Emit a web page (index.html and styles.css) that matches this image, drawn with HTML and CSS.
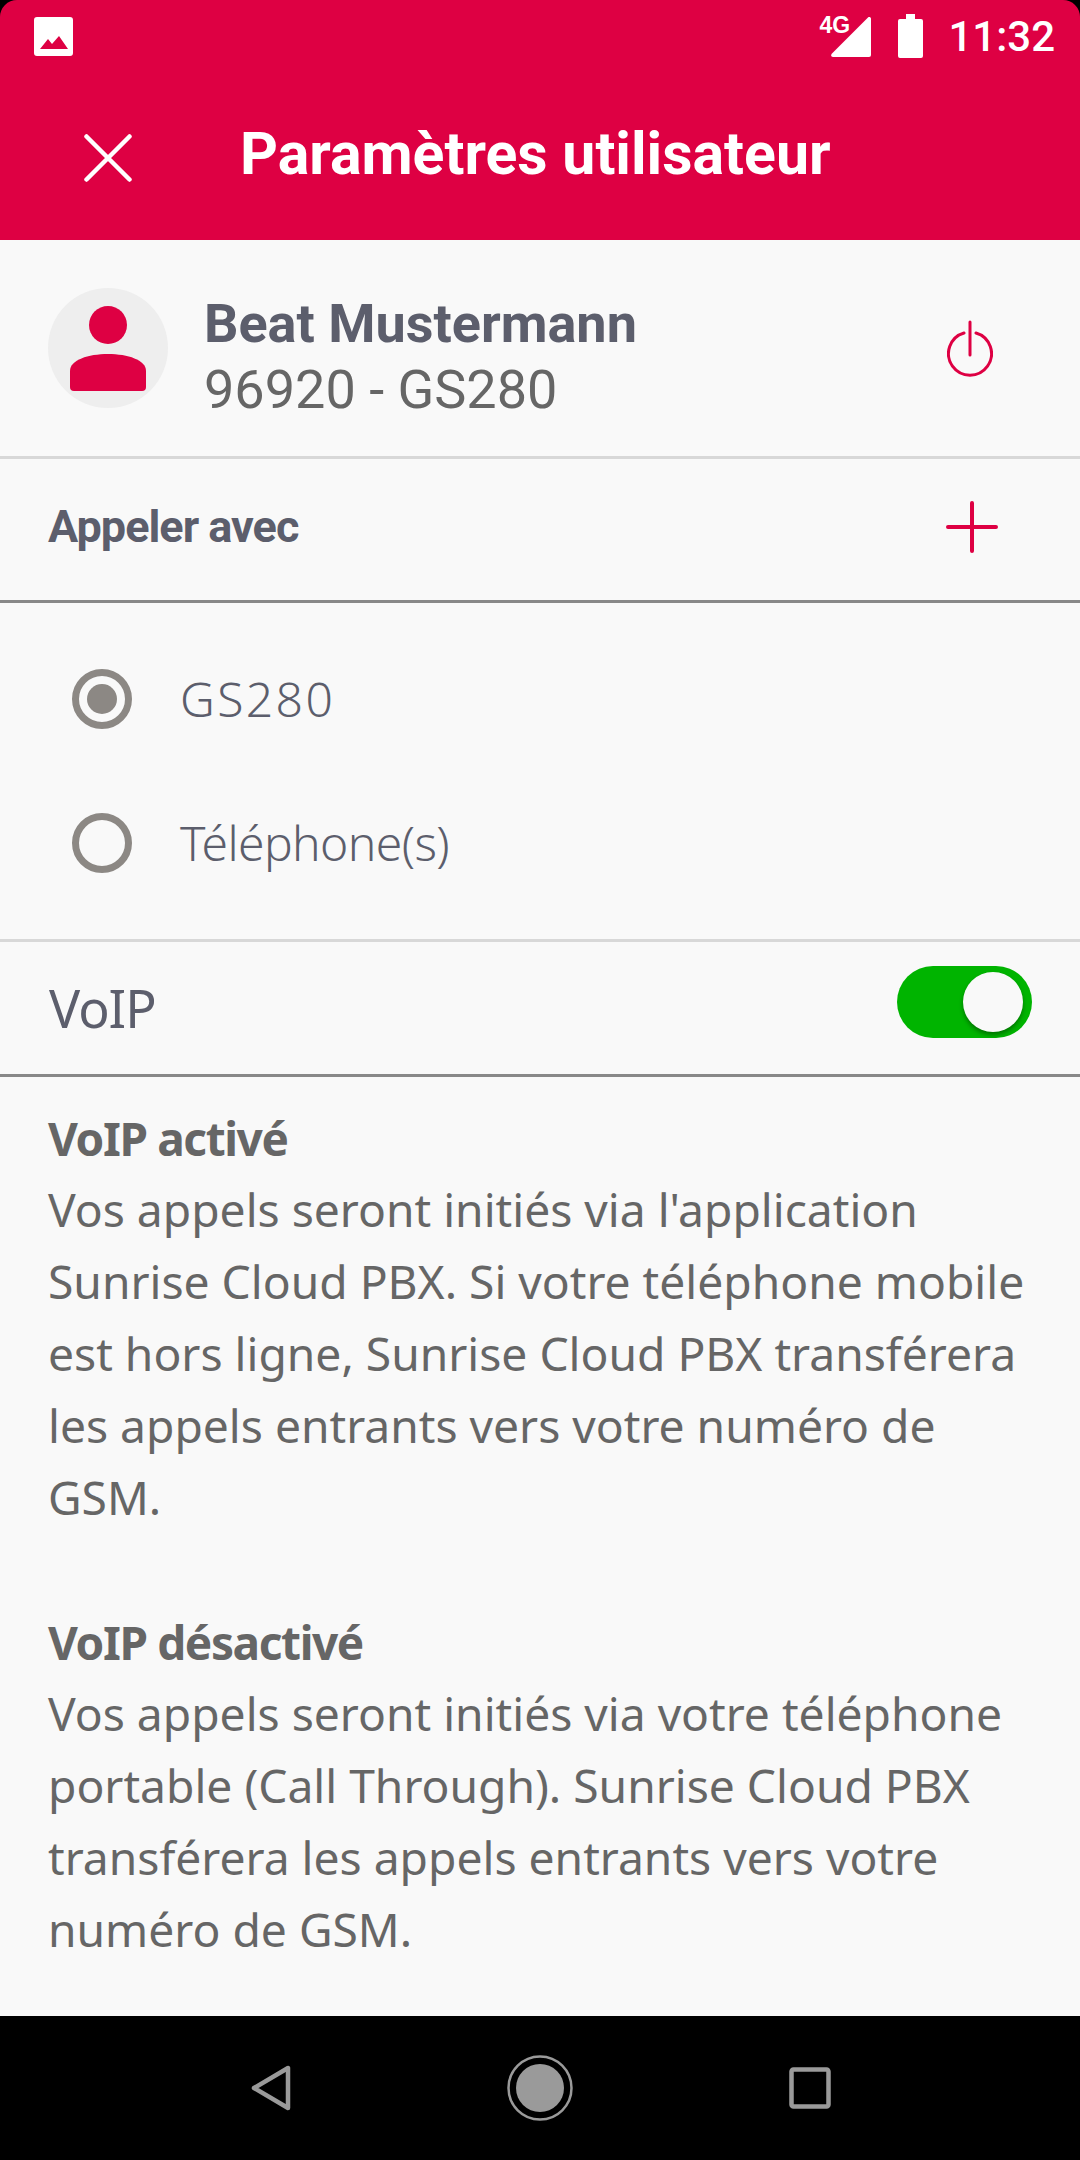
FILE: index.html
```html
<!DOCTYPE html>
<html lang="fr">
<head>
<meta charset="utf-8">
<title>Paramètres utilisateur</title>
<link rel="stylesheet" href="styles.css">
</head>
<body>
<div class="screen">
  <header class="appbar">
    <div class="status">
      <svg class="ic-image" width="39" height="39" viewBox="0 0 39 39"><path fill="#fff" fill-rule="evenodd" d="M3 0h33a3 3 0 0 1 3 3v33a3 3 0 0 1-3 3H3a3 3 0 0 1-3-3V3a3 3 0 0 1 3-3zM6 32h28L25 19l-7 8-4-5z"/></svg>
      <div class="status-right">
        <span class="net">4G</span>
        <svg class="ic-signal" width="40" height="40" viewBox="0 0 40 40"><path fill="#fff" d="M40 2v36a2 2 0 0 1-2 2H2c-2 0-2.500-2-1-3.500L37 .5c1-1 3-.5 3 1.500z"/></svg>
        <svg class="ic-batt" width="25" height="44" viewBox="0 0 25 44"><path fill="#fff" d="M8 0h9v5h6a2 2 0 0 1 2 2v35a2 2 0 0 1-2 2H2a2 2 0 0 1-2-2V7a2 2 0 0 1 2-2h6z"/></svg>
        <span class="clock">11:32</span>
      </div>
    </div>
    <div class="toolbar">
      <svg class="ic-close" width="48" height="48" viewBox="0 0 48 48"><path stroke="#fff" stroke-width="4.500" stroke-linecap="round" d="M2.500 2.500l43 43M45.500 2.500l-43 43"/></svg>
      <h1 class="title">Paramètres utilisateur</h1>
    </div>
  </header>

  <main class="content">
    <section class="user">
      <div class="avatar">
        <svg width="76" height="85" viewBox="0 0 76 85"><circle cx="38" cy="19" r="19" fill="#de0043"/><path fill="#de0043" d="M0 65C0 54 18 48 38 48s38 6 38 17v16a4 4 0 0 1-4 4H4a4 4 0 0 1-4-4z"/></svg>
      </div>
      <div class="user-text">
        <div class="user-name">Beat Mustermann</div>
        <div class="user-sub">96920 - GS280</div>
      </div>
      <svg class="ic-power" width="46" height="57" viewBox="0 0 46 57"><path fill="none" stroke="#de0043" stroke-width="3" stroke-linecap="round" d="M23 2v33M17 13a21.500 21.500 0 1 0 12 0"/></svg>
    </section>

    <section class="call-head">
      <span class="call-title">Appeler avec</span>
      <svg class="ic-plus" width="52" height="52" viewBox="0 0 52 52"><path stroke="#de0043" stroke-width="4" stroke-linecap="round" d="M26 2v48M2 26h48"/></svg>
    </section>

    <section class="options">
      <div class="option"><span class="radio checked"></span><span class="option-label wide">GS280</span></div>
      <div class="option"><span class="radio"></span><span class="option-label tight">Téléphone(s)</span></div>
    </section>

    <section class="voip">
      <span class="voip-label">VoIP</span>
      <span class="switch"><span class="knob"></span></span>
    </section>

    <section class="info">
      <h2 class="info-title">VoIP activé</h2>
      <p class="info-text">Vos appels seront initiés via l'application<br>Sunrise Cloud PBX. Si votre téléphone mobile<br>est hors ligne, Sunrise Cloud PBX transférera<br>les appels entrants vers votre numéro de<br>GSM.</p>
      <h2 class="info-title second">VoIP désactivé</h2>
      <p class="info-text">Vos appels seront initiés via votre téléphone<br>portable (Call Through). Sunrise Cloud PBX<br>transférera les appels entrants vers votre<br>numéro de GSM.</p>
    </section>
  </main>

  <nav class="navbar">
    <svg width="40" height="46" viewBox="0 0 40 46"><path fill="none" stroke="#9a9a9a" stroke-width="4.500" stroke-linejoin="round" d="M37 3v40L3 23z"/></svg>
    <svg width="66" height="66" viewBox="0 0 66 66"><circle cx="33" cy="33" r="31.500" fill="none" stroke="#9a9a9a" stroke-width="2.500"/><circle cx="33" cy="33" r="24" fill="#9a9a9a"/></svg>
    <svg width="42" height="42" viewBox="0 0 42 42"><rect x="2.500" y="2.500" width="37" height="37" rx="2" fill="none" stroke="#9a9a9a" stroke-width="4.500"/></svg>
  </nav>
</div>
</body>
</html>
```
FILE: styles.css
```css
* { box-sizing: border-box; margin: 0; padding: 0; }
html, body { width: 1080px; height: 2160px; background: #000; overflow: hidden; }
body { font-family: Roboto, "Noto Sans", sans-serif; }
.screen { width: 1080px; height: 2160px; display: flex; flex-direction: column; background: #000; }
svg { display: block; flex: none; }

.appbar { height: 240px; background: #de0043; border-radius: 17px 17px 0 0; color: #fff; display: flex; flex-direction: column; }
.status { height: 72px; padding: 0 25px 0 34px; display: flex; justify-content: space-between; align-items: flex-start; }
.ic-image { margin-top: 17px; }
.status-right { display: flex; align-items: flex-start; }
.net { font: 700 23px/20px "Liberation Sans Narrow", "Liberation Sans", sans-serif; margin-top: 15px; width: 25px; position: relative; z-index: 1; }
.ic-signal { margin-top: 17px; margin-left: -13px; }
.ic-batt { margin-left: 27px; margin-top: 14px; }
.clock { font: 500 42px/48px Roboto, sans-serif; margin-left: 25px; margin-top: 13px; }
.toolbar { flex: 1; display: flex; align-items: center; padding: 4px 0 0 84px; }
.title { font: 700 59px/60px Roboto, sans-serif; margin-left: 108px; margin-bottom: 8px; }

.content { flex: 1; background: #f9f9f9; display: flex; flex-direction: column; min-height: 0; }
.user { height: 219px; padding: 0 87px 0 48px; display: flex; align-items: center; border-bottom: 3px solid #d8d8d8; }
.avatar { width: 120px; height: 120px; border-radius: 50%; background: #eeeeee; display: flex; align-items: center; justify-content: center; }
.user-text { flex: 1; margin: 18px 0 0 36px; }
.user-name { font: 700 54px/66px Roboto, sans-serif; color: #5c5e6c; }
.user-sub { font: 400 54px/66px Roboto, sans-serif; color: #666; }
.call-head { height: 144px; padding: 0 82px 6px 48px; display: flex; align-items: center; justify-content: space-between; border-bottom: 3px solid #888; }
.call-title { font: 700 45px/50px Roboto, sans-serif; color: #5c5e6c; letter-spacing: -1px; }
.options { height: 339px; padding: 24px 0 0 72px; display: flex; flex-direction: column; border-bottom: 3px solid #d8d8d8; }
.option { height: 144px; display: flex; align-items: center; }
.radio { width: 60px; height: 60px; border-radius: 50%; border: 7px solid #8c8884; display: flex; align-items: center; justify-content: center; }
.radio.checked::after { content: ""; width: 30px; height: 30px; border-radius: 50%; background: #8c8884; }
.option-label { font: 300 48px/60px "Noto Sans", sans-serif; color: #5c5e6c; margin-left: 48px; }
.option-label.wide { letter-spacing: 2.400px; }
.option-label.tight { letter-spacing: -0.600px; }
.voip { height: 135px; padding: 0 48px; display: flex; align-items: center; justify-content: space-between; border-bottom: 3px solid #888; }
.voip-label { font: 400 52px/64px "Noto Sans", sans-serif; color: #5c5e6c; letter-spacing: -1px; margin-left: 1px; }
.switch { width: 135px; height: 72px; margin-bottom: 12px; border-radius: 36px; background: #00b400; display: flex; align-items: center; justify-content: flex-end; padding-right: 9px; }
.knob { width: 60px; height: 60px; border-radius: 50%; background: #f9f9f9; box-shadow: 0 3px 4px rgba(0,0,0,.35); }
.info { padding: 25px 48px 0 48px; color: #666; }
.info-title { font: 700 46px/72px "Noto Sans", sans-serif; color: #666; letter-spacing: -1.400px; }
.info-title.second { margin-top: 72px; }
.info-text { font: 400 46.200px/72px "Noto Sans", sans-serif; color: #666; white-space: nowrap; }

.navbar { height: 144px; background: #000; display: flex; align-items: center; padding: 0 249px 0 251px; justify-content: space-between; }
```
